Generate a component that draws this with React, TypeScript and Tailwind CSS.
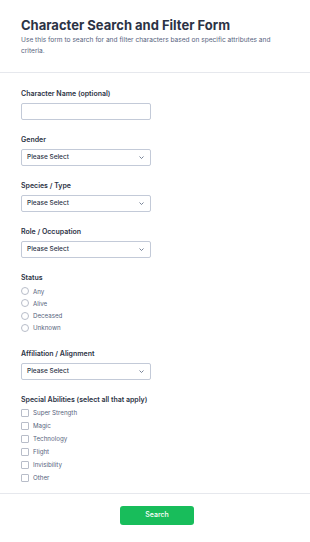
const labelCls = 'block text-[7px] leading-[10px] font-semibold text-[#2c3345]'

function Chevron() {
  return (
    <svg width="5" height="3" viewBox="0 0 5 3" fill="none" className="shrink-0">
      <path d="M0.5 0.5 L2.5 2.5 L4.5 0.5" stroke="#57647e" strokeWidth="0.8" />
    </svg>
  )
}

function SelectBox() {
  return (
    <div className="mt-[4px] flex h-[17px] w-[130px] items-center justify-between rounded-[2px] border border-[#c3cad8] bg-white pl-[5px] pr-[6px]">
      <span className="text-[6.5px] font-medium text-[#2c3345]">Please Select</span>
      <Chevron />
    </div>
  )
}

function Field({ label, children }: { label: string; children: React.ReactNode }) {
  return (
    <div className="mb-[15px]">
      <label className={labelCls}>{label}</label>
      {children}
    </div>
  )
}

const statuses = ['Any', 'Alive', 'Deceased', 'Unknown']
const abilities = ['Super Strength', 'Magic', 'Technology', 'Flight', 'Invisibility', 'Other']

export default function App() {
  return (
    <div className="min-h-[542px] w-[310px] bg-white" style={{ fontFamily: 'Inter, "Liberation Sans", sans-serif' }}>
      <div className="border-b border-[#e6e8ed] px-[21px] pt-[15px] pb-[15px]">
        <h1 className="text-[13px] leading-[20px] font-bold text-[#2c3345]">Character Search and Filter Form</h1>
        <p className="text-[6.6px] leading-[11px] text-[#57647e]">
          Use this form to search for and filter characters based on specific attributes and
          <br />
          criteria.
        </p>
      </div>

      <div className="border-b border-[#e6e8ed] px-[21px] pt-[16px] pb-[9px]">
        <Field label="Character Name (optional)">
          <div className="mt-[4px] h-[17px] w-[130px] rounded-[2px] border border-[#c3cad8] bg-white" />
        </Field>
        <Field label="Gender">
          <SelectBox />
        </Field>
        <Field label="Species / Type">
          <SelectBox />
        </Field>
        <Field label="Role / Occupation">
          <SelectBox />
        </Field>
        <Field label="Status">
          <div className="mt-[2px] flex flex-col">
            {statuses.map((s) => (
              <div key={s} className="flex h-[12.3px] items-center gap-[4px]">
                <span className="h-[8px] w-[8px] rounded-full border border-[#b8bdc9] bg-white" />
                <span className="text-[6.2px] text-[#57647e]">{s}</span>
              </div>
            ))}
          </div>
        </Field>
        <Field label="Affiliation / Alignment">
          <SelectBox />
        </Field>
        <div>
          <label className={labelCls}>Special Abilities (select all that apply)</label>
          <div className="mt-[1px] flex flex-col">
            {abilities.map((a) => (
              <div key={a} className="flex h-[13px] items-center gap-[4px]">
                <span className="h-[8px] w-[8px] rounded-[1px] border border-[#b8bdc9] bg-white" />
                <span className="text-[6.2px] text-[#57647e]">{a}</span>
              </div>
            ))}
          </div>
        </div>
      </div>

      <div className="flex justify-center pt-[12px] pl-[4px]">
        <button
          type="button"
          className="h-[19px] w-[74px] rounded-[3px] bg-[#18bd5b] text-[7px] font-medium text-white"
        >
          Search
        </button>
      </div>
    </div>
  )
}
